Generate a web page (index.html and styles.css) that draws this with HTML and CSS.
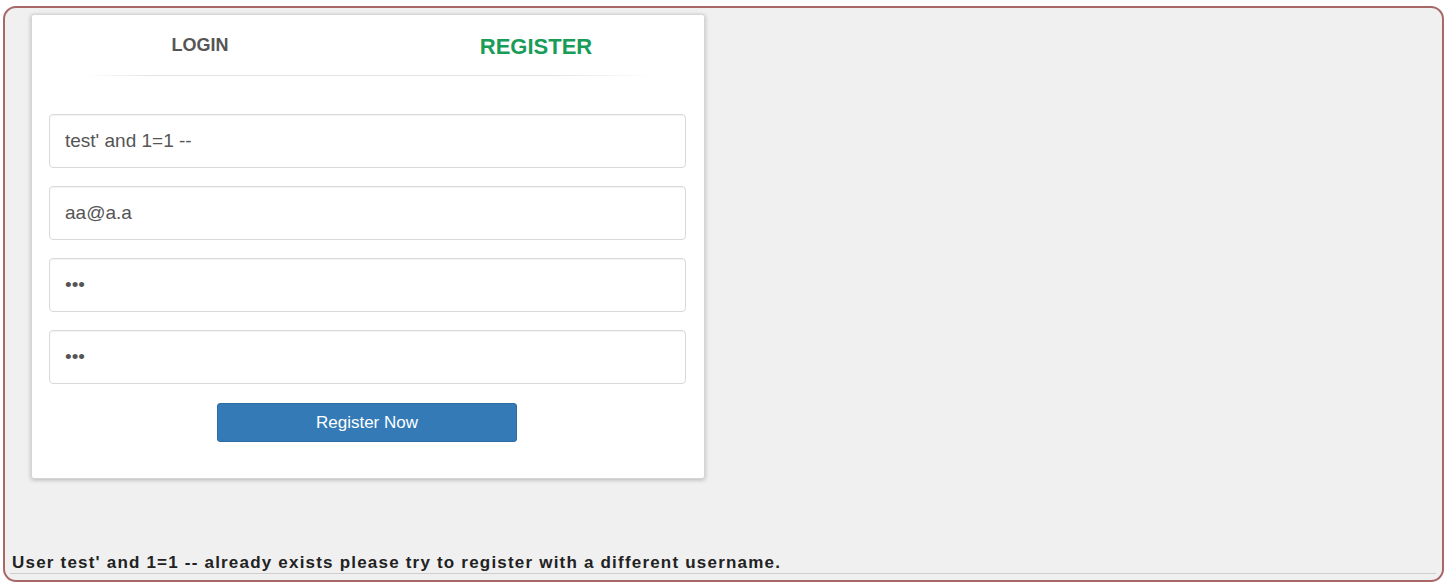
FILE: index.html
```html
<!DOCTYPE html>
<html>
<head>
<meta charset="utf-8">
<link rel="stylesheet" href="styles.css">
</head>
<body>
<div class="frame">
  <div class="card">
    <div class="tabs">
      <div class="tab tab-login">LOGIN</div>
      <div class="tab tab-register">REGISTER</div>
    </div>
    <div class="divider"></div>
    <form class="form">
      <div class="field">test' and 1=1 --</div>
      <div class="field">aa@a.a</div>
      <div class="field dots">•••</div>
      <div class="field dots">•••</div>
      <div class="btn-row"><button type="button" class="btn">Register Now</button></div>
    </form>
  </div>
  <div class="spacer"></div>
  <div class="message">User test' and 1=1 -- already exists please try to register with a different username.</div>
  <div class="rule"></div>
</div>
</body>
</html>
```
FILE: styles.css
```css
html, body {
  margin: 0;
  padding: 0;
  background: #ffffff;
  font-family: "Liberation Sans", Arial, sans-serif;
}
.frame {
  box-sizing: border-box;
  margin: 6px 3px 0 3px;
  width: 1441px;
  height: 576px;
  border: 2px solid #a86868;
  border-radius: 13px;
  background: #f0f0f0;
  display: flex;
  flex-direction: column;
  padding: 6px 0 0 0;
}
.card {
  box-sizing: border-box;
  margin-left: 26px;
  width: 674px;
  height: 465px;
  background: #ffffff;
  border: 1px solid #d6d6d6;
  border-radius: 3px;
  box-shadow: 0 1px 4px rgba(0,0,0,0.25);
  flex: none;
}
.tabs {
  display: flex;
  height: 60px;
}
.tab {
  flex: 1;
  text-align: center;
  font-weight: bold;
}
.tab-login {
  font-size: 18px;
  color: #555555;
  padding-top: 20px;
}
.tab-register {
  font-size: 22px;
  color: #189c58;
  padding-top: 19px;
}
.divider {
  margin: 0 48px 0 54px;
  height: 1px;
  background: linear-gradient(to right, rgba(221,221,221,0), #e2e2e2 12%, #e2e2e2 80%, rgba(221,221,221,0));
}
.form {
  padding: 38px 18px 0 17px;
}
.field {
  box-sizing: border-box;
  height: 54px;
  border: 1px solid #d9d9d9;
  border-radius: 4px;
  padding: 0 15px;
  display: flex;
  align-items: center;
  font-size: 19px;
  color: #555555;
  margin-bottom: 18px;
  box-shadow: inset 0 1px 1px rgba(0,0,0,0.04);
}
.dots {
  font-size: 19px;
}
.btn-row {
  display: flex;
  justify-content: center;
  padding-top: 1px;
}
.btn {
  width: 300px;
  height: 39px;
  margin-right: 1px;
  background: #337ab7;
  border: 1px solid #2e6da4;
  border-radius: 3px;
  color: #ffffff;
  font-family: "Liberation Sans", Arial, sans-serif;
  font-size: 17px;
}
.spacer {
  flex: 1;
}
.message {
  padding-left: 7px;
  font-size: 17px;
  font-weight: bold;
  color: #222222;
  line-height: 18px;
  letter-spacing: 1.2px;
}
.rule {
  height: 1px;
  background: #cfcfcf;
  margin: 1px 6px 6px 5px;
}
```
